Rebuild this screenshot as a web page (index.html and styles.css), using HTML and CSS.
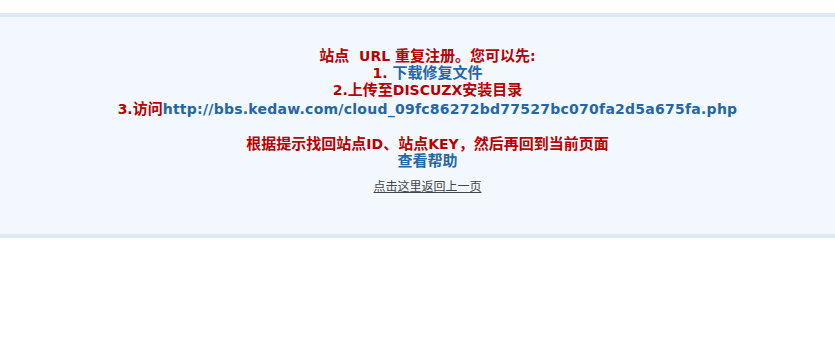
FILE: index.html
```html
<!DOCTYPE html>
<html lang="zh-CN">
<head>
<meta charset="utf-8">
<title>提示信息</title>
<link rel="stylesheet" href="styles.css">
</head>
<body>
<div class="box">
  <div class="msg">
    <div class="line">站点<span class="lat">&nbsp; URL </span>重复注册。您可以先<span class="lat">:</span></div>
    <div class="line"><span class="lat">1. </span><a class="blue" href="#">下载修复文件</a></div>
    <div class="line"><span class="lat">2.</span>上传至<span class="lat">DISCUZX</span>安装目录</div>
    <div class="line big"><span class="lat">3.</span>访问<a class="blue url" href="#">http://bbs.kedaw.com/cloud_09fc86272bd77527bc070fa2d5a675fa.php</a></div>
    <div class="line blank"></div>
    <div class="line">根据提示找回站点<span class="lat">ID</span>、站点<span class="lat">KEY</span>，然后再回到当前页面</div>
    <div class="line"><a class="blue" href="#">查看帮助</a></div>
    <div class="back"><a href="#">点击这里返回上一页</a></div>
  </div>
</div>
</body>
</html>
```
FILE: styles.css
```css
html, body {
  margin: 0;
  padding: 0;
  background: #ffffff;
}
body {
  font-family: "DejaVu Sans", "Noto Sans CJK SC", sans-serif;
}
.box {
  margin-top: 13px;
  background: #f2f8fd;
  border-top: 4px solid #dee9f7;
  border-bottom: 4px solid #dee9f7;
}
.msg {
  padding: 31px 0 38px 20px;
  text-align: center;
  color: #b80000;
  font-size: 15px;
  font-weight: bold;
}
.lat {
  font-size: 14px;
}
.line {
  line-height: 17px;
  height: 17px;
}
.line.big {
  line-height: 21px;
  height: 21px;
}
.line.blank {
  height: 16px;
}
.blue {
  color: #2466a6;
  text-decoration: none;
}
.url {
  font-size: 14px;
  letter-spacing: 0.25px;
}
.back {
  margin-top: 8px;
  line-height: 18px;
  font-size: 12px;
  font-weight: normal;
}
.back a {
  color: #444444;
  text-decoration: underline;
}
```
